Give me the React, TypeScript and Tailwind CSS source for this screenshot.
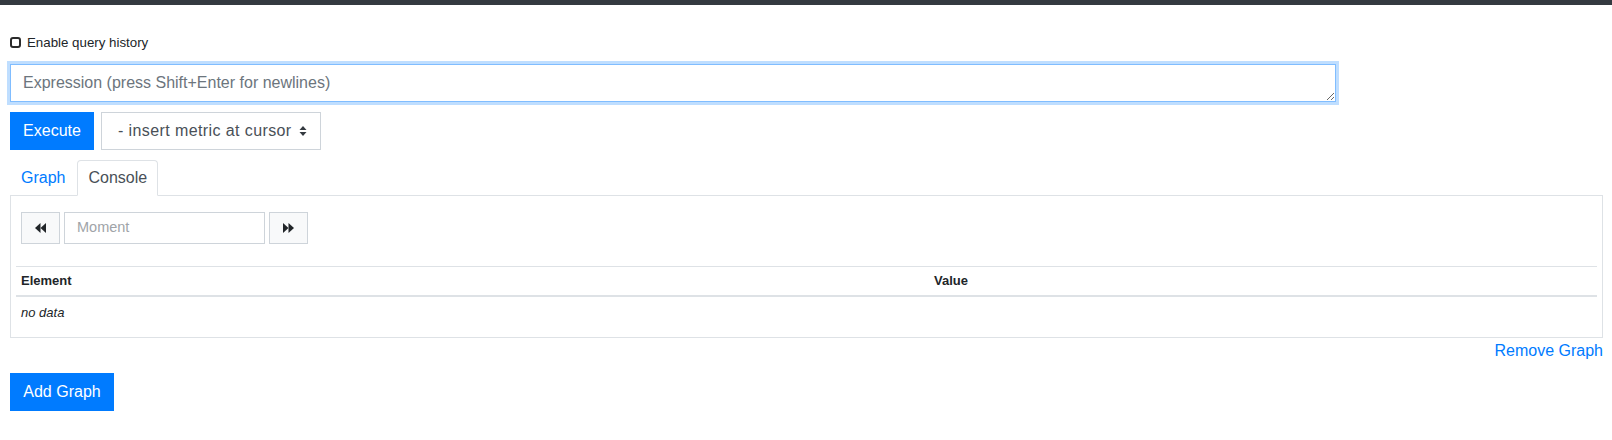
import React from "react";

function Backward() {
  return (
    <svg width="11" height="10" viewBox="0 0 11 10">
      <polygon points="5.5,0 5.5,10 0,5" fill="#212529" />
      <polygon points="11,0 11,10 5.5,5" fill="#212529" />
    </svg>
  );
}

function Forward() {
  return (
    <svg width="11" height="10" viewBox="0 0 11 10">
      <polygon points="0,0 0,10 5.5,5" fill="#212529" />
      <polygon points="5.5,0 5.5,10 11,5" fill="#212529" />
    </svg>
  );
}

function Caret() {
  return (
    <svg width="8" height="10" viewBox="0 0 8 10">
      <polygon points="0.5,4 7.5,4 4,0" fill="#343a40" />
      <polygon points="0.5,6 7.5,6 4,10" fill="#343a40" />
    </svg>
  );
}

export default function App() {
  return (
    <div className="w-[1612px] h-[440px] bg-white text-[#212529]" style={{ fontFamily: '"Liberation Sans", Arial, sans-serif' }}>
      <div className="h-[5px] bg-[#343a40]" />
      <div className="pl-[10px] pr-[9px]">
        <div className="mt-[27px] h-[21px] flex items-center gap-[6px]">
          <span className="w-[11px] h-[11px] border-2 border-[#2b2b2b] rounded-[3px] bg-white" />
          <span className="text-[13.3px] text-[#212529]">Enable query history</span>
        </div>
        <textarea
          className="block mt-[11px] w-[1326px] h-[38px] px-[12px] py-[6px] text-[16px] leading-[24px] text-[#495057] placeholder:text-[#6c757d] border border-[#80bdff] outline-none shadow-[0_0_0_3px_rgba(0,123,255,0.25)] bg-white"
          placeholder="Expression (press Shift+Enter for newlines)"
          style={{ fontFamily: '"Liberation Sans", Arial, sans-serif' }}
        />
        <div className="mt-[10px] flex gap-[7px]">
          <div className="w-[84px] h-[38px] bg-[#007bff] text-white text-[16px] flex items-center justify-center">Execute</div>
          <div className="w-[220px] h-[38px] border border-[#ced4da] bg-white text-[#495057] text-[16px] flex items-center justify-between pl-[16px] pr-[13px]">
            <span className="tracking-[0.4px]">- insert metric at cursor</span>
            <span className="flex items-center"><Caret /></span>
          </div>
        </div>
        <div className="mt-[10px] flex items-end h-[35px]">
          <div className="h-[35px] pl-[10px] pr-[11px] border border-transparent flex items-center text-[16px] text-[#007bff]">Graph</div>
          <div className="h-[36px] mb-[-1px] px-[10px] border border-[#dee2e6] border-b-white rounded-t-[4px] bg-white flex items-center text-[16px] text-[#495057] relative z-10">Console</div>
        </div>
        <div className="border border-[#dee2e6] px-[5px] pb-[8px]">
          <div className="mt-[16px] ml-[5px] flex gap-[4px] h-[32px]">
            <div className="w-[39px] h-[32px] bg-[#f8f9fa] border border-[#ced4da] flex items-center justify-center"><Backward /></div>
            <div className="w-[201px] h-[32px] border border-[#ced4da] bg-white flex items-center pl-[12px] text-[14.5px] text-[#a0a4a8]">Moment</div>
            <div className="w-[39px] h-[32px] bg-[#f8f9fa] border border-[#ced4da] flex items-center justify-center"><Forward /></div>
          </div>
          <div className="mt-[22px] border-t border-[#dee2e6]">
            <div className="flex h-[30px] items-center text-[13px] font-bold text-[#212529] border-b-2 border-[#dee2e6]">
              <div className="w-[913px] px-[5px]">Element</div>
              <div className="px-[5px]">Value</div>
            </div>
            <div className="h-[32px] flex items-center px-[5px] text-[13px] italic text-[#212529]">no data</div>
          </div>
        </div>
        <div className="mt-[1px] h-[24px] flex justify-end items-center text-[16px] text-[#007bff]">Remove Graph</div>
        <div className="mt-[10px] w-[104px] h-[38px] bg-[#007bff] text-white text-[16px] flex items-center justify-center">Add Graph</div>
      </div>
    </div>
  );
}
